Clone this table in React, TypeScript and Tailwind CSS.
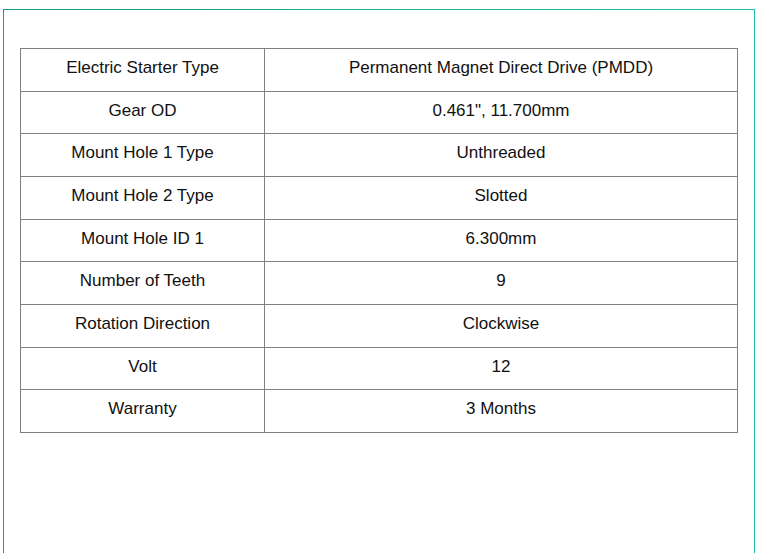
const rows: [string, string][] = [
  ['Electric Starter Type', 'Permanent Magnet Direct Drive (PMDD)'],
  ['Gear OD', '0.461", 11.700mm'],
  ['Mount Hole 1 Type', 'Unthreaded'],
  ['Mount Hole 2 Type', 'Slotted'],
  ['Mount Hole ID 1', '6.300mm'],
  ['Number of Teeth', '9'],
  ['Rotation Direction', 'Clockwise'],
  ['Volt', '12'],
  ['Warranty', '3 Months'],
]

const App = () => {
  return (
    <div className="h-[553px] w-[768px] overflow-hidden bg-white pl-[3px] pt-[9px] font-['Liberation_Sans',Arial,sans-serif]">
      <div className="h-[600px] w-[752px] bg-gradient-to-r from-[#169c89] to-[#1bc3b1] px-px pt-px">
        <div className="h-full w-full bg-white px-4 pt-[38px]">
          <table className="w-[718px] border-collapse text-[17px] text-[#111]">
            <tbody>
              {rows.map(([label, value]) => (
                <tr key={label} className="h-[42.67px]">
                  <td className="w-[244px] border border-[#808080] p-0 pb-[4px] text-center align-middle">
                    {label}
                  </td>
                  <td className="border border-[#808080] p-0 pb-[4px] text-center align-middle">
                    {value}
                  </td>
                </tr>
              ))}
            </tbody>
          </table>
        </div>
      </div>
    </div>
  )
}

export default App
